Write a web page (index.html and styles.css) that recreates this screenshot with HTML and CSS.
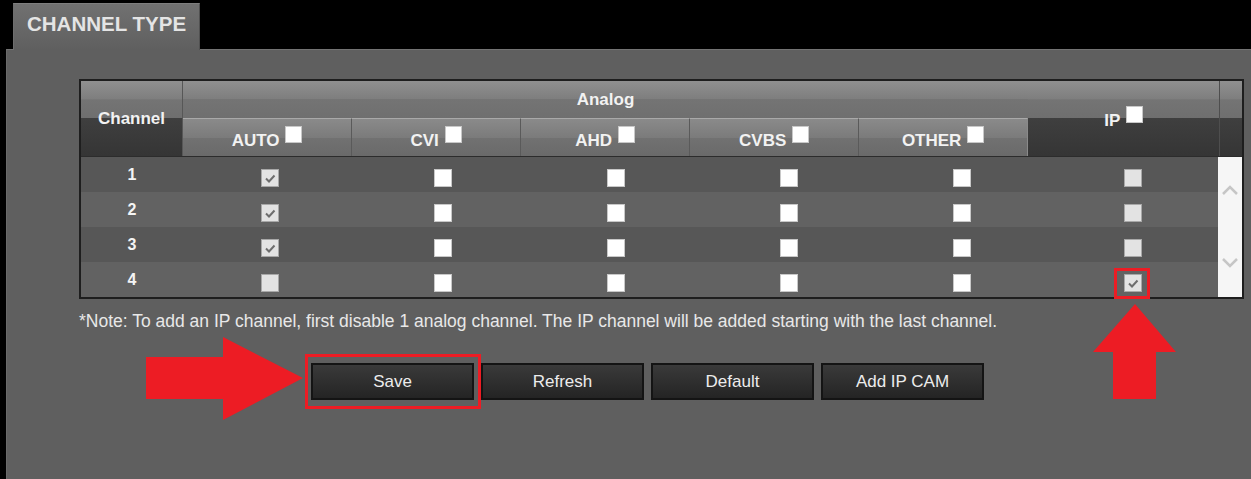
FILE: index.html
```html
<!DOCTYPE html>
<html lang="en">
<head>
    <meta charset="UTF-8">
    <meta name="viewport" content="width=device-width, initial-scale=1.0">
    <title>Channel Type</title>
    <link rel="stylesheet" href="styles.css">
</head>
<body>

    <div class="tabs">
        <div class="tab">CHANNEL TYPE</div>
    </div>

    <div class="panel">
        <div class="grid">
            <div class="grid-head">
                <div class="hc hc-chn split"><span>Channel</span></div>
                <div class="hc hc-analog"><span>Analog</span></div>
                <div class="hc hc-sub"><span>AUTO <i class="cb"></i></span></div>
                <div class="hc hc-sub"><span>CVI <i class="cb"></i></span></div>
                <div class="hc hc-sub"><span>AHD <i class="cb"></i></span></div>
                <div class="hc hc-sub"><span>CVBS <i class="cb"></i></span></div>
                <div class="hc hc-sub last"><span>OTHER <i class="cb"></i></span></div>
                <div class="hc hc-ip split"><span>IP <i class="cb"></i></span></div>
                <div class="hc hc-scroll split"></div>
            </div>

            <div class="grid-body">
                <div class="rows">
                    <div class="row">
                        <div class="cell num">1</div>
                        <div class="cell"><i class="cb off"><svg viewBox="0 0 16 16"><path d="M4 8.5l3 3 5.5-6"/></svg></i></div>
                        <div class="cell"><i class="cb"></i></div>
                        <div class="cell"><i class="cb"></i></div>
                        <div class="cell"><i class="cb"></i></div>
                        <div class="cell"><i class="cb"></i></div>
                        <div class="cell"><i class="cb off"></i></div>
                    </div>
                    <div class="row">
                        <div class="cell num">2</div>
                        <div class="cell"><i class="cb off"><svg viewBox="0 0 16 16"><path d="M4 8.5l3 3 5.5-6"/></svg></i></div>
                        <div class="cell"><i class="cb"></i></div>
                        <div class="cell"><i class="cb"></i></div>
                        <div class="cell"><i class="cb"></i></div>
                        <div class="cell"><i class="cb"></i></div>
                        <div class="cell"><i class="cb off"></i></div>
                    </div>
                    <div class="row">
                        <div class="cell num">3</div>
                        <div class="cell"><i class="cb off"><svg viewBox="0 0 16 16"><path d="M4 8.5l3 3 5.5-6"/></svg></i></div>
                        <div class="cell"><i class="cb"></i></div>
                        <div class="cell"><i class="cb"></i></div>
                        <div class="cell"><i class="cb"></i></div>
                        <div class="cell"><i class="cb"></i></div>
                        <div class="cell"><i class="cb off"></i></div>
                    </div>
                    <div class="row">
                        <div class="cell num">4</div>
                        <div class="cell"><i class="cb off"></i></div>
                        <div class="cell"><i class="cb"></i></div>
                        <div class="cell"><i class="cb"></i></div>
                        <div class="cell"><i class="cb"></i></div>
                        <div class="cell"><i class="cb"></i></div>
                        <div class="cell"><i class="cb off"><svg viewBox="0 0 16 16"><path d="M4 8.5l3 3 5.5-6"/></svg></i></div>
                    </div>
                </div>
                <div class="scroll">
                    <svg viewBox="0 0 24 140" width="24" height="140">
                        <polyline points="5,37 12,30 19,37"/>
                        <polyline points="5,102 12,109 19,102"/>
                    </svg>
                </div>
            </div>
        </div>

        <p class="note">*Note: To add an IP channel, first disable 1 analog channel. The IP channel will be added starting with the last channel.</p>

        <div class="actions">
            <button class="btn">Save</button>
            <button class="btn">Refresh</button>
            <button class="btn">Default</button>
            <button class="btn">Add IP CAM</button>
        </div>

        <!-- red annotation marks -->
        <svg class="arrow arrow-right" viewBox="0 0 157 83">
            <polygon points="0,20 77,20 77,0 157,41 77,83 77,62 0,62"/>
        </svg>
        <div class="mark mark-save"></div>
        <svg class="arrow arrow-up" viewBox="0 0 83 95">
            <polygon points="42,0 83,48 63,48 63,95 20,95 20,48 0,48"/>
        </svg>
        <div class="mark mark-ip"></div>
    </div>

</body>
</html>
```

FILE: styles.css
```css
* {
    box-sizing: border-box;
}
body {
    margin: 0;
    background-color: #000;
    font-family: "Liberation Sans", Arial, sans-serif;
    color: #f0f0f0;
}
.tabs {
    height: 49px;
    padding: 3px 0 0 13px;
}
.tab {
    position: relative;
    z-index: 1;
    width: 187px;
    height: 47px;
    padding: 8px 0 0 13px;
    background: linear-gradient(#717171, #5f5f5f);
    border-top: 1px solid #7e7e7e;
    border-left: 1px solid #6e6e6e;
    border-right: 1px solid #505050;
    font-size: 20.5px;
    font-weight: bold;
    color: #e4e4e4;
}
.panel {
    position: relative;
    min-height: calc(100vh - 49px);
    margin-left: 6px;
    background-color: #5f5f5f;
    border-top: 1px solid #737373;
    border-left: 1px solid #6a6a6a;
    overflow: hidden;
}

/* channel grid */
.grid {
    width: 1165px;
    margin: 29px 0 0 72px;
    border: 2px solid #1e1e1e;
}
.grid-head {
    display: grid;
    grid-template-columns: 102px repeat(5, 169px) 191px 23px;
    grid-template-rows: 37px 38px;
    border-bottom: 1px solid #2c2c2c;
    font-size: 17px;
    font-weight: bold;
}
.hc {
    display: flex;
    justify-content: center;
    align-items: center;
    color: #f2f2f2;
}
.split {
    grid-row: 1 / 3;
    background: linear-gradient(#909090 0%, #7e7e7e 24%, #747474 25%, #6f6f6f 49%, #3f3f3f 49.5%, #353535 100%);
}
.hc-chn {
    grid-column: 1;
    border-right: 1px solid #575757;
}
.hc-analog {
    grid-column: 2 / 7;
    grid-row: 1;
    background: linear-gradient(#909090 0%, #7e7e7e 48%, #747474 50%, #6f6f6f 100%);
}
.hc-sub {
    grid-row: 2;
    padding-top: 1px;
    border-top: 1px solid #a9a9a9;
    border-right: 1px solid #5a5a5a;
    background: linear-gradient(#8a8a8a 0%, #7b7b7b 50%, #717171 52%, #6a6a6a 100%);
}
.hc-sub.last {
    border-right: 1px solid #8a8a8a;
}
.hc-ip {
    grid-column: 7;
}
.hc-scroll {
    grid-column: 8;
    border-left: 1px solid #4e4e4e;
}
.hc .cb {
    width: 17px;
    height: 17px;
    margin-left: 1px;
    vertical-align: 3px;
}

.grid-body {
    display: flex;
}
.rows {
    flex: 1;
}
.row {
    display: grid;
    grid-template-columns: 102px repeat(5, 173px) 170px;
    height: 35px;
    background-color: #575757;
}
.row:nth-child(even) {
    background-color: #626262;
}
.cell {
    display: flex;
    justify-content: center;
    align-items: flex-start;
    padding-top: 12px;
}
.cell.num {
    padding-top: 9px;
    font-size: 16px;
    font-weight: bold;
    line-height: 18px;
    color: #f4f4f4;
}
.scroll {
    width: 24px;
    background-color: #f6f6f6;
}
.scroll svg {
    display: block;
    fill: none;
    stroke: #c6c6c6;
    stroke-width: 2.5;
}

/* checkboxes */
.cb {
    display: inline-block;
    width: 18px;
    height: 18px;
    background-color: #fff;
    border: 1px solid #c8c8c8;
}
.cb.off {
    background-color: #e3e3e3;
    border-color: #a8a8a8;
}
.cb svg {
    display: block;
    width: 16px;
    height: 16px;
    fill: none;
    stroke: #6e6e6e;
    stroke-width: 2;
}

.note {
    margin: 12px 0 0 72px;
    font-size: 17.5px;
    line-height: 20px;
    color: #e8e8e8;
}

.actions {
    display: flex;
    gap: 7px;
    margin: 32px 0 0 304px;
}
.btn {
    width: 163px;
    height: 37px;
    padding: 0;
    background: linear-gradient(#3a3a3a, #242424);
    border: 2px solid #141414;
    font-family: "Liberation Sans", Arial, sans-serif;
    font-size: 17px;
    color: #ececec;
    cursor: pointer;
}

/* annotations */
.arrow {
    position: absolute;
    fill: #ed1c24;
}
.arrow-right {
    left: 139px;
    top: 287px;
    width: 157px;
    height: 83px;
}
.arrow-up {
    left: 1086px;
    top: 254px;
    width: 83px;
    height: 95px;
}
.mark {
    position: absolute;
    border: 3px solid #ed1c24;
}
.mark-save {
    left: 298px;
    top: 304px;
    width: 176px;
    height: 55px;
}
.mark-ip {
    left: 1107px;
    top: 218px;
    width: 36px;
    height: 31px;
}
```
